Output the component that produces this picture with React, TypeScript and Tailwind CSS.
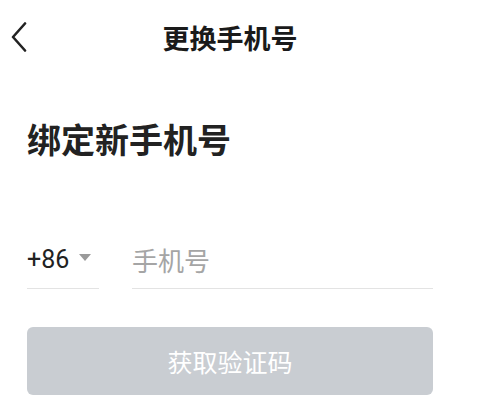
import React from 'react';

const FONT = '"Noto Sans CJK SC", "Noto Sans", sans-serif';

const BackIcon: React.FC = () => (
    <svg width="18" height="30" viewBox="0 0 18 30" fill="none">
        <path d="M15 1.5 L3 15 L15 28.5" stroke="#222" strokeWidth="2.6" strokeLinecap="round" strokeLinejoin="round" />
    </svg>
);

const App: React.FC = () => {
    return (
        <div className="w-[481px] h-[400px] bg-white overflow-hidden" style={{ fontFamily: FONT }}>
            <div className="w-[460px]">
                {/* header */}
                <div className="grid grid-cols-[60px_1fr_60px] items-center h-[74px]">
                    <div className="pl-[10px] flex items-center">
                        <BackIcon />
                    </div>
                    <h1 className="text-center text-[27px] leading-none font-bold text-[#1a1a1a]">更换手机号</h1>
                    <div />
                </div>

                <div className="px-[27px]">
                    <h2 className="mt-[48px] text-[34px] leading-none font-bold text-[#222]">绑定新手机号</h2>

                    <div className="mt-[75px] flex gap-[33px]">
                        <div className="w-[72px] h-[58px] border-b border-[#e3e3e3] flex items-center gap-[10px]">
                            <span className="text-[25px] leading-none text-[#222]" style={{ fontFamily: 'Roboto, "Noto Sans", sans-serif' }}>+86</span>
                            <svg width="12" height="7" viewBox="0 0 12 7" className="mb-[4px]">
                                <path d="M0 0 H12 L6 7 Z" fill="#9a9a9a" />
                            </svg>
                        </div>
                        <div className="flex-1 h-[58px] border-b border-[#e3e3e3] flex items-center">
                            <span className="text-[26px] leading-none text-[#a5a5a5]">手机号</span>
                        </div>
                    </div>

                    <button className="mt-[38px] w-full h-[68px] rounded-[6px] bg-[#c9cdd2] flex items-center justify-center">
                        <span className="text-[25px] leading-none text-white">获取验证码</span>
                    </button>
                </div>
            </div>
        </div>
    );
};

export default App;
